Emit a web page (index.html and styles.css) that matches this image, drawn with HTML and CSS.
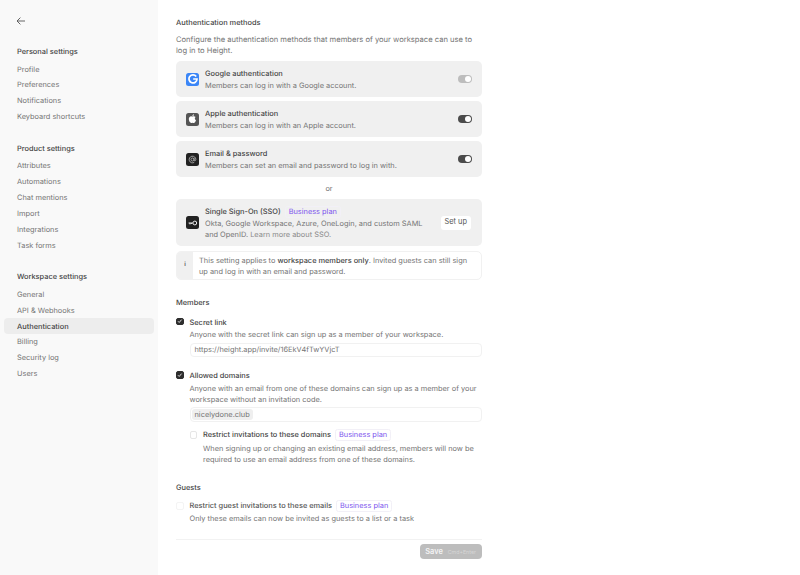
FILE: index.html
```html
<!DOCTYPE html>
<html lang="en">
<head>
  <meta charset="UTF-8" />
  <meta name="viewport" content="width=device-width, initial-scale=1.0" />
  <title>Authentication settings</title>
  <link rel="stylesheet" href="styles.css">
</head>
<body>
  <div class="app">
    <aside class="sidebar">
      <a class="back" href="#" aria-label="Back">
        <svg width="10" height="10" viewBox="0 0 10 10" fill="none" stroke="#555" stroke-width="0.9"><path d="M9 5H1.2M4.4 1.6 1 5l3.4 3.4"/></svg>
      </a>
      <div class="nav-group">
        <h3>Personal settings</h3>
        <a class="nav-item" href="#">Profile</a>
        <a class="nav-item" href="#">Preferences</a>
        <a class="nav-item" href="#">Notifications</a>
        <a class="nav-item" href="#">Keyboard shortcuts</a>
      </div>
      <div class="nav-group">
        <h3>Product settings</h3>
        <a class="nav-item" href="#">Attributes</a>
        <a class="nav-item" href="#">Automations</a>
        <a class="nav-item" href="#">Chat mentions</a>
        <a class="nav-item" href="#">Import</a>
        <a class="nav-item" href="#">Integrations</a>
        <a class="nav-item" href="#">Task forms</a>
      </div>
      <div class="nav-group">
        <h3>Workspace settings</h3>
        <a class="nav-item" href="#">General</a>
        <a class="nav-item" href="#">API &amp; Webhooks</a>
        <a class="nav-item active" href="#">Authentication</a>
        <a class="nav-item" href="#">Billing</a>
        <a class="nav-item" href="#">Security log</a>
        <a class="nav-item" href="#">Users</a>
      </div>
    </aside>

    <main class="content">
      <h2 class="section-title">Authentication methods</h2>
      <p class="intro">Configure the authentication methods that members of your workspace can use to log in to Height.</p>

      <div class="method">
        <span class="method-icon google">
          <svg width="10" height="10" viewBox="0 0 10 10" fill="none" stroke="#fff" stroke-width="1.7"><path d="M8.2 2.5A4 4 0 1 0 9 5H5.2"/></svg>
        </span>
        <div class="method-text">
          <div class="method-name">Google authentication</div>
          <div class="method-desc">Members can log in with a Google account.</div>
        </div>
        <span class="toggle disabled"></span>
      </div>

      <div class="method">
        <span class="method-icon apple">
          <svg width="9" height="10" viewBox="0 0 9 10" fill="#fff"><path d="M4.5 2.6C5.2 2.1 6.6 1.9 7.6 3 6.4 3.9 6.6 5.6 8 6.2 7.5 7.6 6.7 9 5.8 9c-.6 0-.8-.3-1.4-.3S3.7 9 3.2 9C2 9 .8 6.9.8 5.1.8 3 2.3 2 3.3 2.2c.5 0 .9.4 1.2.4Z"/><path d="M4.4 2.1C4.4 1.2 5.1.4 6 .3 6.1 1.3 5.3 2.1 4.4 2.1Z"/></svg>
        </span>
        <div class="method-text">
          <div class="method-name">Apple authentication</div>
          <div class="method-desc">Members can log in with an Apple account.</div>
        </div>
        <span class="toggle"></span>
      </div>

      <div class="method">
        <span class="method-icon dark">
          <svg width="9" height="9" viewBox="0 0 10 10" fill="none" stroke="#bbb" stroke-width="0.9"><circle cx="5" cy="5" r="1.7"/><path d="M6.7 3.3V5.6c0 1.3 2 1.2 2-.6A3.7 3.7 0 1 0 6.9 8.2"/></svg>
        </span>
        <div class="method-text">
          <div class="method-name">Email &amp; password</div>
          <div class="method-desc">Members can set an email and password to log in with.</div>
        </div>
        <span class="toggle"></span>
      </div>

      <div class="or">or</div>

      <div class="method sso">
        <span class="method-icon dark">
          <svg width="10" height="10" viewBox="0 0 10 10" fill="none" stroke="#eee" stroke-width="1"><circle cx="6.8" cy="5" r="1.9"/><path d="M4.9 5H.6M2 5v1.4M3.4 5v1"/></svg>
        </span>
        <div class="method-text">
          <div class="method-name">Single Sign-On (SSO) <span class="plan">Business plan</span></div>
          <div class="method-desc">Okta, Google Workspace, Azure, OneLogin, and custom SAML and OpenID. <span class="muted">Learn more about SSO.</span></div>
        </div>
        <button class="setup">Set up</button>
      </div>

      <div class="note">
        <span class="note-icon">i</span>
        <p>This setting applies to <strong>workspace members only</strong>. Invited guests can still sign up and log in with an email and password.</p>
      </div>

      <h2 class="section-title members-title">Members</h2>

      <div class="option">
        <span class="check on"><svg width="6" height="6" viewBox="0 0 6 6" fill="none" stroke="#fff" stroke-width="0.9"><path d="M1 3.2 2.4 4.6 5 1.5"/></svg></span>
        <div class="option-body">
          <div class="option-name">Secret link</div>
          <div class="option-desc">Anyone with the secret link can sign up as a member of your workspace.</div>
          <div class="field">https://height.app/invite/16EkV4fTwYVjcT</div>
        </div>
      </div>

      <div class="option">
        <span class="check on"><svg width="6" height="6" viewBox="0 0 6 6" fill="none" stroke="#fff" stroke-width="0.9"><path d="M1 3.2 2.4 4.6 5 1.5"/></svg></span>
        <div class="option-body">
          <div class="option-name">Allowed domains</div>
          <div class="option-desc">Anyone with an email from one of these domains can sign up as a member of your workspace without an invitation code.</div>
          <div class="field tags"><span class="tag">nicelydone.club</span></div>
          <div class="option sub-option">
            <span class="check"></span>
            <div class="option-body">
              <div class="option-name">Restrict invitations to these domains <span class="plan">Business plan</span></div>
              <div class="option-desc">When signing up or changing an existing email address, members will now be required to use an email address from one of these domains.</div>
            </div>
          </div>
        </div>
      </div>

      <h2 class="section-title guests-title">Guests</h2>

      <div class="option">
        <span class="check faint"></span>
        <div class="option-body">
          <div class="option-name regular">Restrict guest invitations to these emails <span class="plan">Business plan</span></div>
          <div class="option-desc">Only these emails can now be invited as guests to a list or a task</div>
        </div>
      </div>

      <div class="footer">
        <button class="save">Save <span class="shortcut">Cmd+Enter</span></button>
      </div>
    </main>
  </div>
</body>
</html>
```

FILE: styles.css
```css
* {
  box-sizing: border-box;
}
html, body {
  height: 100%;
}
body {
  margin: 0;
  background: #fff;
  color: #757575;
  font-family: Inter, "Liberation Sans", sans-serif;
  font-size: 7.4px;
  line-height: 10.5px;
  text-rendering: geometricPrecision;
  overflow: hidden;
}
a {
  color: inherit;
  text-decoration: none;
}
h2, h3, p {
  margin: 0;
  font-size: inherit;
}
.app {
  display: flex;
  height: 575px;
}

/* sidebar */
.sidebar {
  width: 158px;
  flex-shrink: 0;
  background: #f9f9f9;
  padding: 16px 4px 0;
}
.back {
  display: block;
  height: 10px;
  margin-left: 12px;
}
.nav-group {
  margin-bottom: 14px;
}
.back + .nav-group {
  margin-top: 15.5px;
}
.nav-group h3 {
  height: 19.5px;
  padding: 5.5px 13px 0;
  color: #444;
  font-weight: 500;
}
.nav-item {
  display: block;
  height: 15.85px;
  padding: 3.5px 13px 0;
  border-radius: 4px;
}
.nav-item.active {
  background: #ededed;
  color: #444;
  font-weight: 500;
}

/* main column */
.content {
  width: 324px;
  padding: 16px 0 0 18px;
}
.section-title {
  height: 12px;
  color: #444;
  font-weight: 500;
  line-height: 14px;
}
.intro {
  margin: 6.2px 0 5px;
  font-size: 7.6px;
  line-height: 11px;
}
.method {
  display: flex;
  align-items: center;
  height: 36px;
  margin-bottom: 4px;
  padding: 0 10px;
  background: #f0f0f0;
  border-radius: 5px;
}
.method-icon {
  display: flex;
  align-items: center;
  justify-content: center;
  width: 13px;
  height: 13px;
  margin-right: 6px;
  flex-shrink: 0;
  border-radius: 2.5px;
}
.method-icon.google {
  background: #3b86f7;
}
.method-icon.apple {
  background: #555;
}
.method-icon.dark {
  background: #222;
}
.method-text {
  flex: 1;
  padding-top: 2px;
}
.method-name {
  color: #444;
  font-weight: 500;
  margin-bottom: 1.5px;
}
.toggle {
  position: relative;
  width: 14px;
  height: 8px;
  flex-shrink: 0;
  border-radius: 4px;
  background: #4b4b4b;
}
.toggle::after {
  content: "";
  position: absolute;
  top: 1px;
  right: 1px;
  width: 6px;
  height: 6px;
  border-radius: 50%;
  background: #fff;
}
.toggle.disabled {
  background: #bdbdbd;
}
.or {
  height: 19px;
  margin-top: -1px;
  padding-top: 3.5px;
  text-align: center;
}
.method.sso {
  height: 47px;
  margin-bottom: 5px;
  padding-right: 11px;
}
.method.sso .method-text {
  padding-top: 0;
}
.method.sso .method-name {
  height: 11px;
  margin-bottom: 1px;
  line-height: 11px;
}
.method.sso .method-desc {
  line-height: 11px;
}
.plan {
  display: inline-block;
  height: 12px;
  margin-left: 2px;
  padding: 0 3px;
  border: 1px solid #f2f0f7;
  border-radius: 2.5px;
  color: #7c55ee;
  font-weight: 400;
  line-height: 10px;
}
.muted {
  color: #8a8a8a;
}
.setup {
  height: 14px;
  margin-left: 10px;
  padding: 0 4px;
  border: 0;
  border-radius: 3px;
  background: #fff;
  color: #555;
  font: inherit;
}
.note {
  display: flex;
  align-items: stretch;
  height: 29px;
  border: 1px solid #f1f1f1;
  border-radius: 5px;
  overflow: hidden;
}
.note-icon {
  display: flex;
  align-items: center;
  justify-content: center;
  width: 16px;
  flex-shrink: 0;
  background: #f0f0f0;
  color: #555;
  font-size: 6px;
  font-weight: 600;
}
.note p {
  padding: 3px 10px 0 6px;
  line-height: 11px;
}
.note strong {
  color: #444;
  font-weight: 500;
}
.members-title {
  margin: 16px 0 7.5px;
}
.option {
  display: flex;
  gap: 6px;
  margin-bottom: 12px;
}
.check {
  display: flex;
  align-items: center;
  justify-content: center;
  width: 7.5px;
  height: 7.5px;
  margin-top: 2px;
  flex-shrink: 0;
  border: 1px solid #e6e6e6;
  border-radius: 2px;
  background: #fff;
}
.check.on {
  border-color: #2e2e2e;
  background: #2e2e2e;
}
.check.faint {
  border-color: #f4f4f4;
}
.option-body {
  flex: 1;
  min-width: 0;
}
.option-name {
  height: 12px;
  margin-bottom: 1.5px;
  color: #444;
  font-weight: 500;
  line-height: 14px;
}
.sub-option .option-name,
.option-name.regular {
  line-height: 12px;
}
.option-name.regular {
  margin-bottom: 0.5px;
  color: #555;
}
.option-desc {
  line-height: 11px;
}
.field {
  height: 14.5px;
  margin-top: 2.5px;
  padding: 1.5px 4px;
  border: 1px solid #f1f1f1;
  border-radius: 4px;
}
.field.tags {
  padding: 1px;
}
.tag {
  display: inline-block;
  height: 11px;
  padding: 0 3px;
  border-radius: 3px;
  background: #efefef;
  line-height: 11px;
}
.sub-option {
  margin: 7.5px 0 0;
}
.guests-title {
  margin: 16.5px 0 7px;
}
.footer {
  display: flex;
  justify-content: flex-end;
  margin-top: 15.5px;
  padding-top: 3.5px;
  border-top: 1px solid #f2f2f2;
}
.save {
  height: 15px;
  padding: 0 6px 0 5px;
  border: 0;
  border-radius: 4px;
  background: #bdbdbd;
  color: #f4f4f4;
  font-family: inherit;
  font-size: 7.4px;
  font-weight: 600;
}
.shortcut {
  margin-left: 3px;
  color: #d6d6d6;
  font-size: 5.3px;
  font-weight: 400;
}
```
